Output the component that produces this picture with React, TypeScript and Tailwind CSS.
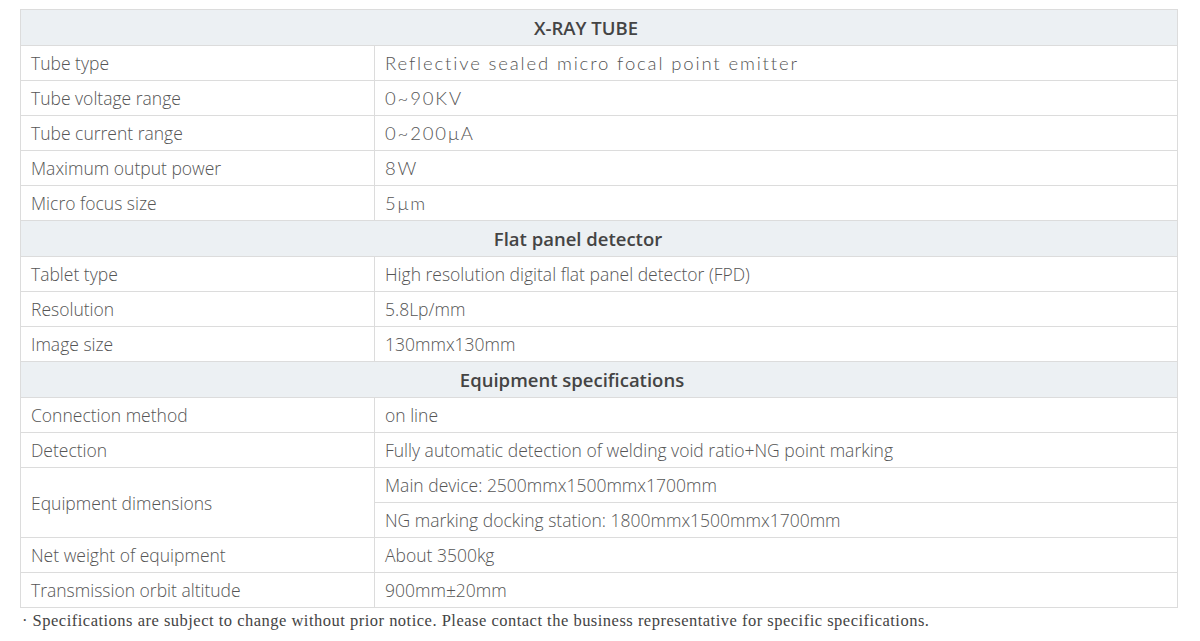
import React from "react";

const sans = "font-['Open_Sans',sans-serif]";

type Row = { k: string; v: string[]; alt?: boolean };

function Header({ title, pr }: { title: string; pr: string }) {
  return (
    <tr className="h-[36px] bg-[#ecf0f3]">
      <td
        colSpan={2}
        className={`border border-[#dcdcdc] text-center text-[18.5px] font-semibold text-[#444] ${pr}`}
      >
        {title}
      </td>
    </tr>
  );
}

const keyCls = "border border-[#dcdcdc] pl-[10px] text-[17.5px] font-light text-[#555] leading-[24px]";

function DataRow({ k, v, alt }: Row) {
  const valCls = alt
    ? "font-['Lato',sans-serif] font-light tracking-[0.1em] text-[18.5px] leading-[24px]"
    : "text-[17.5px] font-light leading-[24px]";
  if (v.length === 1) {
    return (
      <tr className="h-[35px]">
        <td className={keyCls}>{k}</td>
        <td className={`border border-[#dcdcdc] pl-[10px] text-[#555] ${valCls}`}>{v[0]}</td>
      </tr>
    );
  }
  return (
    <>
      <tr className="h-[35px]">
        <td rowSpan={v.length} className={keyCls}>
          {k}
        </td>
        <td className={`border border-[#dcdcdc] pl-[10px] text-[#555] ${valCls}`}>{v[0]}</td>
      </tr>
      {v.slice(1).map((x) => (
        <tr key={x} className="h-[35px]">
          <td className={`border border-[#dcdcdc] pl-[10px] text-[#555] ${valCls}`}>{x}</td>
        </tr>
      ))}
    </>
  );
}

export default function App() {
  const tube: Row[] = [
    { k: "Tube type", v: ["Reflective sealed micro focal point emitter"], alt: true },
    { k: "Tube voltage range", v: ["0~90KV"], alt: true },
    { k: "Tube current range", v: ["0~200μA"], alt: true },
    { k: "Maximum output power", v: ["8W"], alt: true },
    { k: "Micro focus size", v: ["5μm"], alt: true },
  ];
  const fpd: Row[] = [
    { k: "Tablet type", v: ["High resolution digital flat panel detector (FPD)"] },
    { k: "Resolution", v: ["5.8Lp/mm"] },
    { k: "Image size", v: ["130mmx130mm"] },
  ];
  const eq: Row[] = [
    { k: "Connection method", v: ["on line"] },
    { k: "Detection", v: ["Fully automatic detection of welding void ratio+NG point marking"] },
    {
      k: "Equipment dimensions",
      v: ["Main device: 2500mmx1500mmx1700mm", "NG marking docking station: 1800mmx1500mmx1700mm"],
    },
    { k: "Net weight of equipment", v: ["About 3500kg"] },
    { k: "Transmission orbit altitude", v: ["900mm±20mm"] },
  ];
  return (
    <div className={`w-[1200px] h-[641px] bg-white pt-[9px] pl-[20px] pr-[22px] ${sans}`}>
      <table className="w-full border-collapse table-fixed">
        <colgroup>
          <col className="w-[354px]" />
          <col />
        </colgroup>
        <tbody>
          <Header title="X-RAY TUBE" pr="pr-[26px]" />
          {tube.map((r) => (
            <DataRow key={r.k} {...r} />
          ))}
          <Header title="Flat panel detector" pr="pr-[42px]" />
          {fpd.map((r) => (
            <DataRow key={r.k} {...r} />
          ))}
          <Header title="Equipment specifications" pr="pr-[54px]" />
          {eq.map((r) => (
            <DataRow key={r.k} {...r} />
          ))}
        </tbody>
      </table>
      <p className="mt-[3px] pl-[2px] font-['Liberation_Serif',serif] text-[16.5px] leading-[20px] tracking-[0.03em] text-[#444]">
        · Specifications are subject to change without prior notice. Please contact the business representative for
        specific specifications.
      </p>
    </div>
  );
}
